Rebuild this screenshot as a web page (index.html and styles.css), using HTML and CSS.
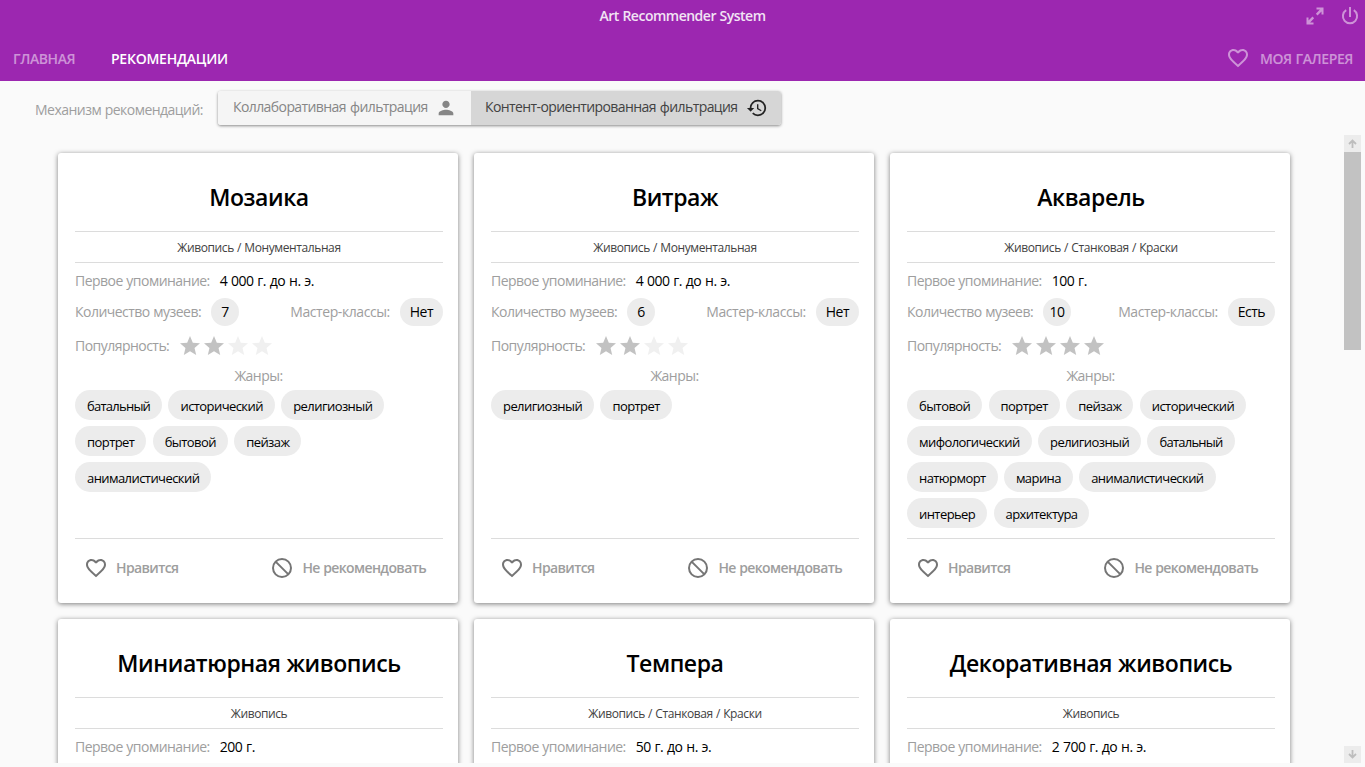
FILE: index.html
```html
<!DOCTYPE html>
<html lang="ru">
<head>
<meta charset="utf-8">
<title>Art Recommender System</title>
<link rel="stylesheet" href="styles.css">
</head>
<body>
<svg class="defs" aria-hidden="true">
  <symbol id="heart" viewBox="0 0 24 24"><path d="M16.5 3c-1.74 0-3.41.81-4.5 2.09C10.91 3.81 9.24 3 7.5 3 4.42 3 2 5.42 2 8.5c0 3.78 3.4 6.86 8.55 11.54L12 21.35l1.45-1.32C18.6 15.36 22 12.28 22 8.5 22 5.42 19.58 3 16.5 3zm-4.4 15.55l-.1.1-.1-.1C7.14 14.24 4 11.39 4 8.5 4 6.5 5.5 5 7.5 5c1.54 0 3.04.99 3.57 2.36h1.87C13.46 5.99 14.96 5 16.5 5c2 0 3.5 1.5 3.5 3.5 0 2.89-3.14 5.74-7.9 10.05z"/></symbol>
  <symbol id="block" viewBox="0 0 24 24"><g fill="none" stroke="currentColor" stroke-width="2"><circle cx="12" cy="12" r="9"/><path d="M5.6 5.6 18.4 18.4"/></g></symbol>
  <symbol id="star" viewBox="0 0 24 24"><path d="M12 17.27 18.18 21l-1.64-7.03L22 9.24l-7.19-.61L12 2 9.19 8.63 2 9.24l5.46 4.73L5.82 21z"/></symbol>
  <symbol id="person" viewBox="0 0 24 24"><path d="M12 12c2.21 0 4-1.79 4-4s-1.79-4-4-4-4 1.79-4 4 1.79 4 4 4zm0 2c-2.67 0-8 1.34-8 4v2h16v-2c0-2.66-5.33-4-8-4z"/></symbol>
  <symbol id="history" viewBox="0 0 24 24"><path d="M13 3a9 9 0 0 0-9 9H1l3.89 3.89.07.14L9 12H6c0-3.87 3.13-7 7-7s7 3.13 7 7-3.13 7-7 7c-1.93 0-3.68-.79-4.94-2.06l-1.42 1.42A8.95 8.95 0 0 0 13 21a9 9 0 0 0 0-18zm-1 5v5l4.28 2.54.72-1.21-3.5-2.08V8H12z"/></symbol>
  <symbol id="power" viewBox="0 0 18 18"><g fill="none" stroke="currentColor" stroke-width="2"><path d="M9 0v10M5.200 3.200a7.100 7.100 0 1 0 7.600 0"/></g></symbol>
  <symbol id="expand" viewBox="0 0 18 18"><path d="M10.5 0.500H17.500v7h-2V4.400l-4 4L9.900 6.800l4-4.300h-3.400zM7.500 17.500H.5v-7h2v3.100l4-4L8.100 11.200l-4 4.300h3.400z"/></symbol>
  <symbol id="arrow" viewBox="0 0 9 9"><path fill="none" stroke="currentColor" stroke-width="1.800" d="M4.500 9V1.500M1 5 4.500 1.500 8 5"/></symbol>
</svg>

<header class="header">
  <div class="titlebar">
    <div class="app-title">Art Recommender System</div>
    <div class="window-actions">
      <svg class="icon-win"><use href="#expand"/></svg>
      <svg class="icon-win"><use href="#power"/></svg>
    </div>
  </div>
  <nav class="nav">
    <a class="nav-item nav-home">ГЛАВНАЯ</a>
    <a class="nav-item nav-rec">РЕКОМЕНДАЦИИ</a>
    <a class="nav-item nav-gallery"><svg class="icon"><use href="#heart"/></svg><span>МОЯ ГАЛЕРЕЯ</span></a>
  </nav>
</header>

<div class="toolbar">
  <span class="toolbar-label">Механизм рекомендаций:</span>
  <div class="toggle">
    <button class="toggle-btn toggle-collab"><span>Коллаборативная фильтрация</span><svg class="icon-sm"><use href="#person"/></svg></button>
    <button class="toggle-btn toggle-content"><span>Контент-ориентированная фильтрация</span><svg class="icon-sm"><use href="#history"/></svg></button>
  </div>
</div>

<main class="viewport">
  <div class="cards">
    <article class="card">
      <h2 class="card-title">Мозаика</h2>
      <div class="category">Живопись / Монументальная</div>
      <div class="row row-date"><span class="label">Первое упоминание:</span><span class="value">4 000 г. до н. э.</span></div>
      <div class="row row-count"><span class="label label-count">Количество музеев:</span><span class="pill pill-num">7</span><span class="label label-master">Мастер-классы:</span><span class="pill">Нет</span></div>
      <div class="row row-stars"><span class="label label-pop">Популярность:</span><span class="stars"><svg class="star"><use href="#star"/></svg><svg class="star"><use href="#star"/></svg><svg class="star off"><use href="#star"/></svg><svg class="star off"><use href="#star"/></svg></span></div>
      <div class="genres-label">Жанры:</div>
      <div class="chips"><span class="chip chip-tight">батальный</span><span class="chip">исторический</span><span class="chip">религиозный</span><span class="chip">портрет</span><span class="chip">бытовой</span><span class="chip">пейзаж</span><span class="chip">анималистический</span></div>
      <div class="card-actions"><button class="action"><svg class="icon"><use href="#heart"/></svg><span>Нравится</span></button><button class="action action-block"><svg class="icon"><use href="#block"/></svg><span>Не рекомендовать</span></button></div>
    </article>
    <article class="card">
      <h2 class="card-title">Витраж</h2>
      <div class="category">Живопись / Монументальная</div>
      <div class="row row-date"><span class="label">Первое упоминание:</span><span class="value">4 000 г. до н. э.</span></div>
      <div class="row row-count"><span class="label label-count">Количество музеев:</span><span class="pill pill-num">6</span><span class="label label-master">Мастер-классы:</span><span class="pill">Нет</span></div>
      <div class="row row-stars"><span class="label label-pop">Популярность:</span><span class="stars"><svg class="star"><use href="#star"/></svg><svg class="star"><use href="#star"/></svg><svg class="star off"><use href="#star"/></svg><svg class="star off"><use href="#star"/></svg></span></div>
      <div class="genres-label">Жанры:</div>
      <div class="chips"><span class="chip">религиозный</span><span class="chip">портрет</span></div>
      <div class="card-actions"><button class="action"><svg class="icon"><use href="#heart"/></svg><span>Нравится</span></button><button class="action action-block"><svg class="icon"><use href="#block"/></svg><span>Не рекомендовать</span></button></div>
    </article>
    <article class="card">
      <h2 class="card-title">Акварель</h2>
      <div class="category">Живопись / Станковая / Краски</div>
      <div class="row row-date"><span class="label">Первое упоминание:</span><span class="value">100 г.</span></div>
      <div class="row row-count"><span class="label label-count">Количество музеев:</span><span class="pill pill-num">10</span><span class="label label-master">Мастер-классы:</span><span class="pill">Есть</span></div>
      <div class="row row-stars"><span class="label label-pop">Популярность:</span><span class="stars"><svg class="star"><use href="#star"/></svg><svg class="star"><use href="#star"/></svg><svg class="star"><use href="#star"/></svg><svg class="star"><use href="#star"/></svg></span></div>
      <div class="genres-label">Жанры:</div>
      <div class="chips"><span class="chip">бытовой</span><span class="chip">портрет</span><span class="chip">пейзаж</span><span class="chip">исторический</span><span class="chip">мифологический</span><span class="chip">религиозный</span><span class="chip chip-tight">батальный</span><span class="chip">натюрморт</span><span class="chip">марина</span><span class="chip">анималистический</span><span class="chip">интерьер</span><span class="chip">архитектура</span></div>
      <div class="card-actions"><button class="action"><svg class="icon"><use href="#heart"/></svg><span>Нравится</span></button><button class="action action-block"><svg class="icon"><use href="#block"/></svg><span>Не рекомендовать</span></button></div>
    </article>
    <article class="card">
      <h2 class="card-title">Миниатюрная живопись</h2>
      <div class="category">Живопись</div>
      <div class="row row-date"><span class="label">Первое упоминание:</span><span class="value">200 г.</span></div>
    </article>
    <article class="card">
      <h2 class="card-title">Темпера</h2>
      <div class="category">Живопись / Станковая / Краски</div>
      <div class="row row-date"><span class="label">Первое упоминание:</span><span class="value">50 г. до н. э.</span></div>
    </article>
    <article class="card">
      <h2 class="card-title">Декоративная живопись</h2>
      <div class="category">Живопись</div>
      <div class="row row-date"><span class="label">Первое упоминание:</span><span class="value">2 700 г. до н. э.</span></div>
    </article>
  </div>
  <div class="scrollbar">
    <div class="scroll-btn"><svg class="arrow"><use href="#arrow"/></svg></div>
    <div class="scroll-thumb"></div>
    <div class="scroll-btn scroll-down"><svg class="arrow"><use href="#arrow"/></svg></div>
  </div>
</main>
</body>
</html>
```
FILE: styles.css
```css
* { box-sizing: border-box; }
body {
  margin: 0;
  width: 1365px;
  height: 767px;
  overflow: hidden;
  display: flex;
  flex-direction: column;
  background: #fafafa;
  font-family: "Open Sans", "Noto Sans", sans-serif;
  font-size: 14px;
  letter-spacing: -.53px;
  word-spacing: .5px;
  color: #000;
  white-space: nowrap;
}
.defs { display: none; }
svg { fill: currentColor; flex: none; display: block; }
button { border: 0; background: none; padding: 0; font: inherit; letter-spacing: inherit; word-spacing: inherit; color: inherit; }
.icon { width: 24px; height: 24px; }
.icon-sm { width: 22px; height: 22px; }
.icon-win { width: 18px; height: 18px; }

.header { height: 81px; background: #9c27b0; color: #fff; flex: none; }
.titlebar { height: 31px; display: grid; grid-template-columns: 1fr auto 1fr; align-items: center; }
.app-title { grid-column: 2; font-weight: 600; opacity: .87; letter-spacing: -.5px; }
.window-actions { display: flex; gap: 17px; justify-content: flex-end; padding-right: 6px; opacity: .5; }
.nav { height: 50px; display: flex; align-items: center; padding: 5px 12px 0 13px; font-weight: 600; letter-spacing: -.4px; }
.nav-home { opacity: .5; width: 98px; }
.nav-rec { letter-spacing: -.25px; }
.nav-gallery { margin-left: auto; display: flex; align-items: center; gap: 10px; opacity: .5; }
.nav-gallery .icon { margin-top: -2px; }

.toolbar { height: 54px; flex: none; display: flex; align-items: flex-start; padding: 10px 0 0 35px; }
.toolbar-label { width: 183px; line-height: 37px; color: #9e9e9e; }
.toggle { display: flex; height: 34px; border-radius: 3px; box-shadow: 0 1px 3px rgba(0,0,0,.45); }
.toggle-btn { display: flex; align-items: center; justify-content: space-between; height: 34px; letter-spacing: -.59px; word-spacing: 1px; }
.toggle-btn span { padding-bottom: 3px; }
.toggle-collab { width: 253px; padding: 0 14px 0 15px; background: #f5f5f5; color: #868686; border-radius: 3px 0 0 3px; }
.toggle-content { width: 310px; padding: 0 13px 0 14px; background: #d6d6d6; color: #424242; border-radius: 0 3px 3px 0; }
.toggle-content .icon-sm { color: #222; }

.viewport { height: 628px; overflow: hidden; display: flex; justify-content: space-between; padding: 0 4px 0 58px; }
.cards { display: grid; grid-template-columns: repeat(3, 400px); grid-auto-rows: 450px; gap: 16px; padding-top: 18px; }
.card { background: #fff; border-radius: 3px; box-shadow: 0 1px 5px rgba(0,0,0,.5); padding: 0 15px 0 17px; display: flex; flex-direction: column; }
.card-title { margin: 0; height: 78px; line-height: 88px; text-align: center; font-size: 23px; font-weight: 600; letter-spacing: -.42px; flex: none; }
.category { height: 32px; line-height: 31px; flex: none; border-top: 1px solid #dcdcdc; border-bottom: 1px solid #dcdcdc; text-align: center; font-size: 12px; letter-spacing: -.4px; color: #424242; }
.row { display: flex; align-items: center; flex: none; }
.row-date { height: 35px; padding-bottom: 1px; }
.row-count { height: 28px; }
.row-stars { height: 39px; }
.label { color: #9e9e9e; }
.value { margin-left: 10px; letter-spacing: -.46px; }
.pill { height: 28px; line-height: 28px; border-radius: 14px; background: #ececec; padding: 0 10px; margin-left: 10px; }
.pill-num { width: 28px; padding: 0; text-align: center; }
.row-count .label { padding-bottom: 2px; }
.label-master { margin-left: auto; letter-spacing: -.42px; }
.stars { display: flex; margin-left: 9px; color: #c2c2c2; }
.star { width: 24px; height: 24px; }
.star.off { color: #f0f0f0; }
.genres-label { height: 25px; line-height: 22px; text-align: center; color: #9e9e9e; padding-right: 1px; flex: none; }
.chips { display: flex; flex-wrap: wrap; gap: 6px 6.3px; }
.chip { height: 30px; line-height: 32px; border-radius: 15px; background: #ececec; padding: 0 12px; font-size: 13px; letter-spacing: -.57px; }
.chip-tight { letter-spacing: -.75px; }
.card-actions { margin-top: auto; height: 65px; border-top: 1px solid #dcdcdc; padding: 0 17px 7px 9px; display: flex; justify-content: space-between; flex: none; }
.action { display: flex; align-items: center; gap: 8px; color: #9e9e9e; font-weight: 600; letter-spacing: -.62px; }
.action .icon { color: #757575; }

.scrollbar { width: 17px; height: 628px; display: flex; flex-direction: column; }
.scroll-btn { height: 17px; background: #ececec; color: #bdbdbd; display: flex; align-items: center; justify-content: center; }
.arrow { width: 9px; height: 9px; }
.scroll-thumb { height: 198px; background: #c2c2c2; }
.scroll-down { margin-top: auto; }
.scroll-down .arrow { transform: rotate(180deg); }
```
